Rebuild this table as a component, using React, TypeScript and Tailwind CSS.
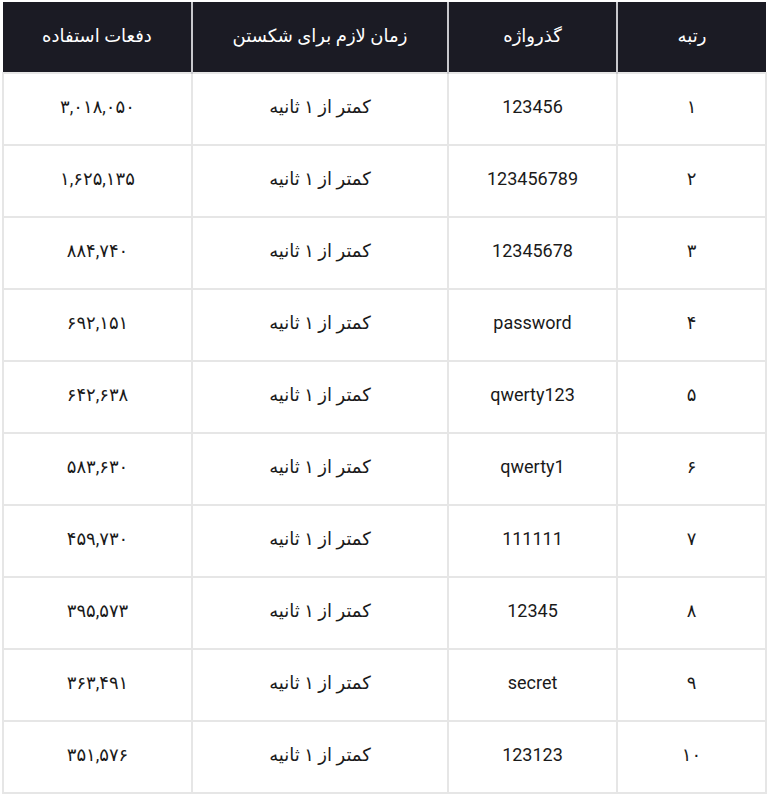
const rows = [
  { rank: "۱", pass: "123456", count: "۳,۰۱۸,۰۵۰" },
  { rank: "۲", pass: "123456789", count: "۱,۶۲۵,۱۳۵" },
  { rank: "۳", pass: "12345678", count: "۸۸۴,۷۴۰" },
  { rank: "۴", pass: "password", count: "۶۹۲,۱۵۱" },
  { rank: "۵", pass: "qwerty123", count: "۶۴۲,۶۳۸" },
  { rank: "۶", pass: "qwerty1", count: "۵۸۳,۶۳۰" },
  { rank: "۷", pass: "111111", count: "۴۵۹,۷۳۰" },
  { rank: "۸", pass: "12345", count: "۳۹۵,۵۷۳" },
  { rank: "۹", pass: "secret", count: "۳۶۳,۴۹۱" },
  { rank: "۱۰", pass: "123123", count: "۳۵۱,۵۷۶" },
]

export default function App() {
  return (
    <div className="min-h-screen bg-white pt-[2px] pl-[2px]" style={{ fontFamily: 'Roboto, "DejaVu Sans", sans-serif' }}>
      <table dir="rtl" className="w-[763px] table-fixed border-collapse text-center">
        <colgroup>
          <col className="w-[149px]" />
          <col className="w-[169px]" />
          <col className="w-[256px]" />
          <col className="w-[189px]" />
        </colgroup>
        <thead>
          <tr className="h-[71px] bg-[#1b1b24] text-[18px] text-white">
            <th className="border-l-2 border-[#c8c8cc] pb-[4px] font-medium">رتبه</th>
            <th className="border-l-2 border-[#c8c8cc] pb-[4px] font-medium">گذرواژه</th>
            <th className="border-l-2 border-[#c8c8cc] pb-[4px] font-medium">زمان لازم برای شکستن</th>
            <th className="pb-[4px] font-medium">دفعات استفاده</th>
          </tr>
        </thead>
        <tbody className="text-[18px] text-[#1a1a1a]">
          {rows.map((r) => (
            <tr key={r.rank} className="h-[72px]">
              <td className="border-2 border-[#e6e6e6] pb-[6px]">{r.rank}</td>
              <td className="border-2 border-[#e6e6e6] pb-[6px]">{r.pass}</td>
              <td className="border-2 border-[#e6e6e6] pb-[6px]">کمتر از ۱ ثانیه</td>
              <td className="border-2 border-[#e6e6e6] pb-[6px]">{r.count}</td>
            </tr>
          ))}
        </tbody>
      </table>
    </div>
  )
}
